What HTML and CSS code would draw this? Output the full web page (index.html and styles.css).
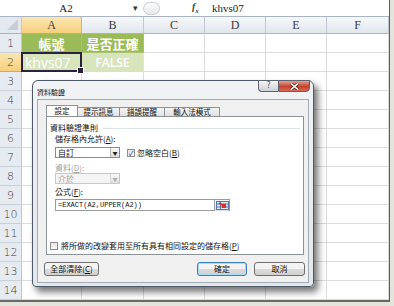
FILE: index.html
```html
<!DOCTYPE html>
<html lang="zh-Hant">

<head>
    <meta charset="UTF-8">
    <meta name="viewport" content="width=device-width, initial-scale=1.0">
    <title>資料驗證</title>
    <link rel="stylesheet" href="styles.css">
</head>

<body>
    <div class="window">
        <div class="formula-bar">
            <div class="name-box">A2<span class="drop">&#9662;</span></div>
            <div class="grip"></div>
            <div class="fx">f<sub>x</sub></div>
            <div class="formula">khvs07</div>
        </div>

        <div class="sheet">
            <div class="corner"></div>
            <div class="col-head sel">A</div>
            <div class="col-head">B</div>
            <div class="col-head">C</div>
            <div class="col-head">D</div>
            <div class="col-head">E</div>
            <div class="col-head">F</div>

            <div class="row-head">1</div>
            <div class="cell dark center">帳號</div>
            <div class="cell dark center">是否正確</div>
            <div class="cell"></div><div class="cell"></div><div class="cell"></div><div class="cell"></div>

            <div class="row-head sel">2</div>
            <div class="cell light active">khvs07</div>
            <div class="cell light center false">FALSE</div>
            <div class="cell"></div><div class="cell"></div><div class="cell"></div><div class="cell"></div>

            <div class="row-head">3</div>
            <div class="cell"></div><div class="cell"></div><div class="cell"></div><div class="cell"></div><div class="cell"></div><div class="cell"></div>
            <div class="row-head">4</div>
            <div class="cell"></div><div class="cell"></div><div class="cell"></div><div class="cell"></div><div class="cell"></div><div class="cell"></div>
            <div class="row-head">5</div>
            <div class="cell"></div><div class="cell"></div><div class="cell"></div><div class="cell"></div><div class="cell"></div><div class="cell"></div>
            <div class="row-head">6</div>
            <div class="cell"></div><div class="cell"></div><div class="cell"></div><div class="cell"></div><div class="cell"></div><div class="cell"></div>
            <div class="row-head">7</div>
            <div class="cell"></div><div class="cell"></div><div class="cell"></div><div class="cell"></div><div class="cell"></div><div class="cell"></div>
            <div class="row-head">8</div>
            <div class="cell"></div><div class="cell"></div><div class="cell"></div><div class="cell"></div><div class="cell"></div><div class="cell"></div>
            <div class="row-head">9</div>
            <div class="cell"></div><div class="cell"></div><div class="cell"></div><div class="cell"></div><div class="cell"></div><div class="cell"></div>
            <div class="row-head">10</div>
            <div class="cell"></div><div class="cell"></div><div class="cell"></div><div class="cell"></div><div class="cell"></div><div class="cell"></div>
            <div class="row-head">11</div>
            <div class="cell"></div><div class="cell"></div><div class="cell"></div><div class="cell"></div><div class="cell"></div><div class="cell"></div>
            <div class="row-head">12</div>
            <div class="cell"></div><div class="cell"></div><div class="cell"></div><div class="cell"></div><div class="cell"></div><div class="cell"></div>
            <div class="row-head">13</div>
            <div class="cell"></div><div class="cell"></div><div class="cell"></div><div class="cell"></div><div class="cell"></div><div class="cell"></div>
            <div class="row-head">14</div>
            <div class="cell"></div><div class="cell"></div><div class="cell"></div><div class="cell"></div><div class="cell"></div><div class="cell"></div>
        </div>

        <!-- 資料驗證 dialog -->
        <div class="dialog">
            <div class="dialog-title">資料驗證</div>
            <div class="title-buttons">
                <div class="help-btn">?</div>
                <div class="close-btn">
                    <svg width="9" height="7" viewBox="0 0 9 7">
                        <path d="M1 0.5 L8 6.5 M8 0.5 L1 6.5" stroke="#5a2a22" stroke-width="3" />
                        <path d="M1 0.5 L8 6.5 M8 0.5 L1 6.5" stroke="#fff" stroke-width="1.6" />
                    </svg>
                </div>
            </div>

            <div class="client">
                <div class="tabs">
                    <div class="tab active">設定</div>
                    <div class="tab t2">提示訊息</div>
                    <div class="tab t3">錯誤提醒</div>
                    <div class="tab t4">輸入法模式</div>
                </div>

                <div class="panel">
                    <div class="group">
                        <span>資料驗證準則</span>
                        <div class="group-line"></div>
                    </div>
                    <div class="fields">
                        <div class="label">儲存格內允許(<u>A</u>):</div>
                        <div class="combo-row">
                            <div class="combo">
                                <span>自訂</span>
                                <div class="combo-btn">&#9660;</div>
                            </div>
                            <div class="check checked">&#10003;</div>
                            <span>忽略空白(<u>B</u>)</span>
                        </div>
                        <div class="label disabled">資料(<u>D</u>):</div>
                        <div class="combo disabled">
                            <span>介於</span>
                            <div class="combo-btn">&#9660;</div>
                        </div>
                        <div class="label formula-label">公式(<u>F</u>):</div>
                        <div class="ref-input">
                            <span>=EXACT(A2,UPPER(A2))</span>
                            <div class="ref-btn">
                                <svg width="13" height="9" viewBox="0 0 13 9">
                                    <rect x="0.5" y="0.5" width="12" height="8" fill="#dfe9f5" stroke="#5577aa" />
                                    <line x1="1" y1="3" x2="12" y2="3" stroke="#5577aa" />
                                    <line x1="1" y1="6" x2="12" y2="6" stroke="#5577aa" />
                                    <line x1="4.5" y1="1" x2="4.5" y2="8" stroke="#5577aa" />
                                    <rect x="6" y="3" width="4" height="4" fill="#d8312a" />
                                    <line x1="3" y1="2" x2="8" y2="5" stroke="#d8312a" stroke-width="1.5" />
                                </svg>
                            </div>
                        </div>
                    </div>
                    <div class="apply-row">
                        <div class="check"></div>
                        <span>將所做的改變套用至所有具有相同設定的儲存格(<u>P</u>)</span>
                    </div>
                </div>

                <div class="buttons">
                    <div class="btn clear">全部清除(<u>C</u>)</div>
                    <div class="btn ok">確定</div>
                    <div class="btn cancel">取消</div>
                </div>
            </div>
        </div>
    </div>
</body>

</html>
```

FILE: styles.css
```css
* {
    margin: 0;
    padding: 0;
    box-sizing: border-box;
}

body {
    font-family: "Noto Sans CJK TC", "Liberation Sans", sans-serif;
    background-color: #e4e4dc;
    width: 394px;
    height: 306px;
    overflow: hidden;
}

.window {
    position: relative;
    width: 390px;
    height: 302px;
    background-color: #fff;
    border-right: 1px solid #5c5c5c;
    border-bottom: 2px solid #6a6a66;
    overflow: hidden;
}

/* formula bar */
.formula-bar {
    display: flex;
    align-items: center;
    height: 17px;
    border-bottom: 1px solid #a9b4c2;
    font-family: "Liberation Serif", serif;
    font-size: 11px;
    color: #222;
}

.name-box {
    position: relative;
    width: 140px;
    height: 16px;
    line-height: 16px;
    text-align: center;
    padding-right: 8px;
}

.drop {
    position: absolute;
    right: 2px;
    top: 0;
    font-size: 9px;
    color: #333;
}

.grip {
    width: 17px;
    height: 13px;
    margin-left: 3px;
    border: 1px solid #c6ccd4;
    border-radius: 7px;
    background: linear-gradient(#fdfdfd, #e6e9ed);
}

.fx {
    margin-left: 32px;
    width: 20px;
    font-style: italic;
    font-weight: bold;
    font-size: 10px;
    color: #444;
}

.fx sub {
    font-size: 7px;
}

.formula {
    font-size: 11px;
}

/* sheet grid */
.sheet {
    display: grid;
    grid-template-columns: 22px 60px 62px 61px 61px 61px 62px;
    grid-template-rows: 17px repeat(14, 19px);
}

.corner,
.col-head,
.row-head {
    background: linear-gradient(#f6f8fa, #e1e6ec);
    border-right: 1px solid #c0c7d0;
    border-bottom: 1px solid #aab3be;
    color: #3b3b3b;
}

.corner {
    position: relative;
    background: #e4e9ef;
}

.corner::after {
    content: "";
    position: absolute;
    right: 3px;
    bottom: 3px;
    border-left: 11px solid transparent;
    border-bottom: 11px solid #c8ced6;
}

.col-head {
    display: flex;
    justify-content: center;
    align-items: center;
    font-family: "Liberation Serif", serif;
    font-size: 12px;
}

.row-head {
    display: flex;
    justify-content: center;
    align-items: center;
    background: #e6ebf1;
    border-bottom: 1px solid #c9d0d8;
    font-family: "DejaVu Sans", sans-serif;
    font-size: 11px;
    font-weight: 300;
}

.col-head.sel,
.row-head.sel {
    background: linear-gradient(#fbe6b2, #f6cf7c);
    border-right-color: #e6b24f;
    border-bottom-color: #e0a93d;
}

.cell {
    border-right: 1px solid #dadcdd;
    border-bottom: 1px solid #dadcdd;
    display: flex;
    align-items: center;
    color: #fff;
    white-space: nowrap;
}

.cell.center {
    justify-content: center;
}

.cell.dark {
    background-color: #9bbb59;
    border-right-color: #a7c36c;
    border-bottom-color: #a7c36c;
    font-size: 13px;
    font-weight: bold;
}

.cell.light {
    background-color: #d7e4bc;
    border-right-color: #dfe9c9;
}

.cell.active {
    position: relative;
    padding-left: 3px;
    font-family: "Open Sans", sans-serif;
    font-size: 14px;
}

.cell.active::after {
    content: "";
    position: absolute;
    left: -1px;
    top: -1px;
    right: -1px;
    bottom: -1px;
    border: 2px solid #2a2140;
}

.cell.active::before {
    content: "";
    position: absolute;
    right: -3px;
    bottom: -3px;
    width: 5px;
    height: 5px;
    background: #2a2140;
    border: 1px solid #fff;
    z-index: 1;
}

.cell.false {
    font-family: "Open Sans", sans-serif;
    font-size: 12px;
    font-weight: 600;
}

/* dialog */
.dialog {
    position: absolute;
    left: 32px;
    top: 80px;
    width: 282px;
    height: 207px;
    display: flex;
    flex-direction: column;
    padding: 0 4px 3px;
    background: linear-gradient(#f1f3f5, #e3e6ea);
    border: 1px solid #4f5965;
    border-radius: 6px 6px 4px 4px;
    box-shadow: 4px 5px 7px rgba(0, 0, 0, 0.55);
    font-size: 8px;
    line-height: 10px;
    color: #111;
}

.dialog-title {
    height: 18px;
    padding-top: 6px;
    font-size: 7px;
}

.title-buttons {
    position: absolute;
    top: -1px;
    right: 3px;
    display: flex;
}

.help-btn,
.close-btn {
    height: 12px;
    display: flex;
    justify-content: center;
    align-items: center;
    border: 1px solid #5b6470;
    font-family: "DejaVu Sans", sans-serif;
}

.help-btn {
    width: 20px;
    border-radius: 0 0 0 4px;
    border-right: none;
    background: linear-gradient(#f4f5f7, #cdd2d8);
    color: #555;
    font-size: 8px;
}

.close-btn {
    width: 32px;
    border-radius: 0 0 4px 0;
    background: linear-gradient(#e8a090, #c5432f 55%, #d76a52);
}

.client {
    flex: 1;
    display: flex;
    flex-direction: column;
    padding: 7px 3px 0 5px;
    background-color: #f0f0f0;
    border: 1px solid #a3abb5;
}

.tabs {
    display: flex;
    height: 9px;
    margin-left: 3px;
}

.tab {
    display: flex;
    justify-content: center;
    align-items: center;
    background: linear-gradient(#f4f4f4, #e1e1e1);
    border: 1px solid #8e9299;
    border-bottom: none;
    border-left: none;
    white-space: nowrap;
    font-size: 7.5px;
}

.tab.active {
    width: 32px;
    height: 11px;
    margin-top: -2px;
    background: #fff;
    border-left: 1px solid #8e9299;
    position: relative;
    z-index: 1;
}

.tab.t2 {
    width: 42px;
}

.tab.t3 {
    width: 45px;
}

.tab.t4 {
    width: 55px;
}

.panel {
    height: 139px;
    margin-left: 3px;
    margin-right: 1px;
    display: flex;
    flex-direction: column;
    padding: 6px 3px 3px;
    background: #fff;
    border: 1px solid #8e9299;
}

.group {
    display: flex;
    align-items: center;
    height: 10px;
}

.group-line {
    flex: 1;
    margin-left: 5px;
    border-top: 1px solid #dce3ea;
}

.fields {
    flex: 1;
    padding-left: 5px;
}

.label {
    height: 10px;
    margin-top: 1px;
}

.label.disabled {
    margin-top: 5px;
    color: #a0a0a0;
}

.label.formula-label {
    margin-top: 3px;
}

.combo-row {
    display: flex;
    align-items: center;
    margin-top: 3px;
}

.combo {
    width: 65px;
    height: 11px;
    display: flex;
    justify-content: space-between;
    align-items: center;
    padding-left: 2px;
    border: 1px solid #8a8a8a;
    background: #fff;
}

.combo-btn {
    width: 9px;
    height: 9px;
    display: flex;
    justify-content: center;
    align-items: center;
    border-left: 1px solid #b6b6b6;
    background: linear-gradient(#f7f7f7, #dedede);
    font-size: 5px;
    color: #222;
}

.combo.disabled {
    color: #a0a0a0;
    border-color: #c8c8c8;
    background: #f4f4f4;
}

.combo.disabled .combo-btn {
    color: #aaa;
    border-left-color: #d6d6d6;
}

.check {
    width: 8px;
    height: 8px;
    margin-left: 7px;
    margin-right: 2px;
    display: flex;
    justify-content: center;
    align-items: center;
    border: 1px solid #8f8f8f;
    background: linear-gradient(#e4e4e4, #fafafa);
    font-size: 7px;
}

.check.checked {
    color: #3366bb;
    font-weight: bold;
}

.ref-input {
    width: 175px;
    height: 12px;
    margin-top: 2px;
    display: flex;
    justify-content: space-between;
    align-items: center;
    padding-left: 2px;
    border: 1px solid #9a9a9a;
    font-family: "Liberation Mono", monospace;
    font-size: 7px;
}

.ref-btn {
    width: 15px;
    height: 11px;
    display: flex;
    justify-content: center;
    align-items: center;
    border-left: 1px solid #a0a0a0;
    background: linear-gradient(#f8f8f8, #dcdcdc);
}

.apply-row {
    display: flex;
    align-items: center;
    height: 10px;
}

.apply-row .check {
    margin-left: 0;
    margin-right: 3px;
}

.buttons {
    display: flex;
    margin-top: 7px;
    margin-left: 1px;
}

.btn {
    height: 14px;
    display: flex;
    justify-content: center;
    align-items: center;
    border: 1px solid #707070;
    border-radius: 3px;
    background: linear-gradient(#f3f3f3 50%, #dcdcdc 50%, #d0d0d0);
    white-space: nowrap;
}

.btn.clear {
    width: 55px;
}

.btn.ok {
    width: 50px;
    margin-left: auto;
    border-color: #3c7fb1;
    box-shadow: inset 0 0 0 1px #a8dcf5;
}

.btn.cancel {
    width: 51px;
    margin-left: 7px;
    margin-right: 0;
}
```
